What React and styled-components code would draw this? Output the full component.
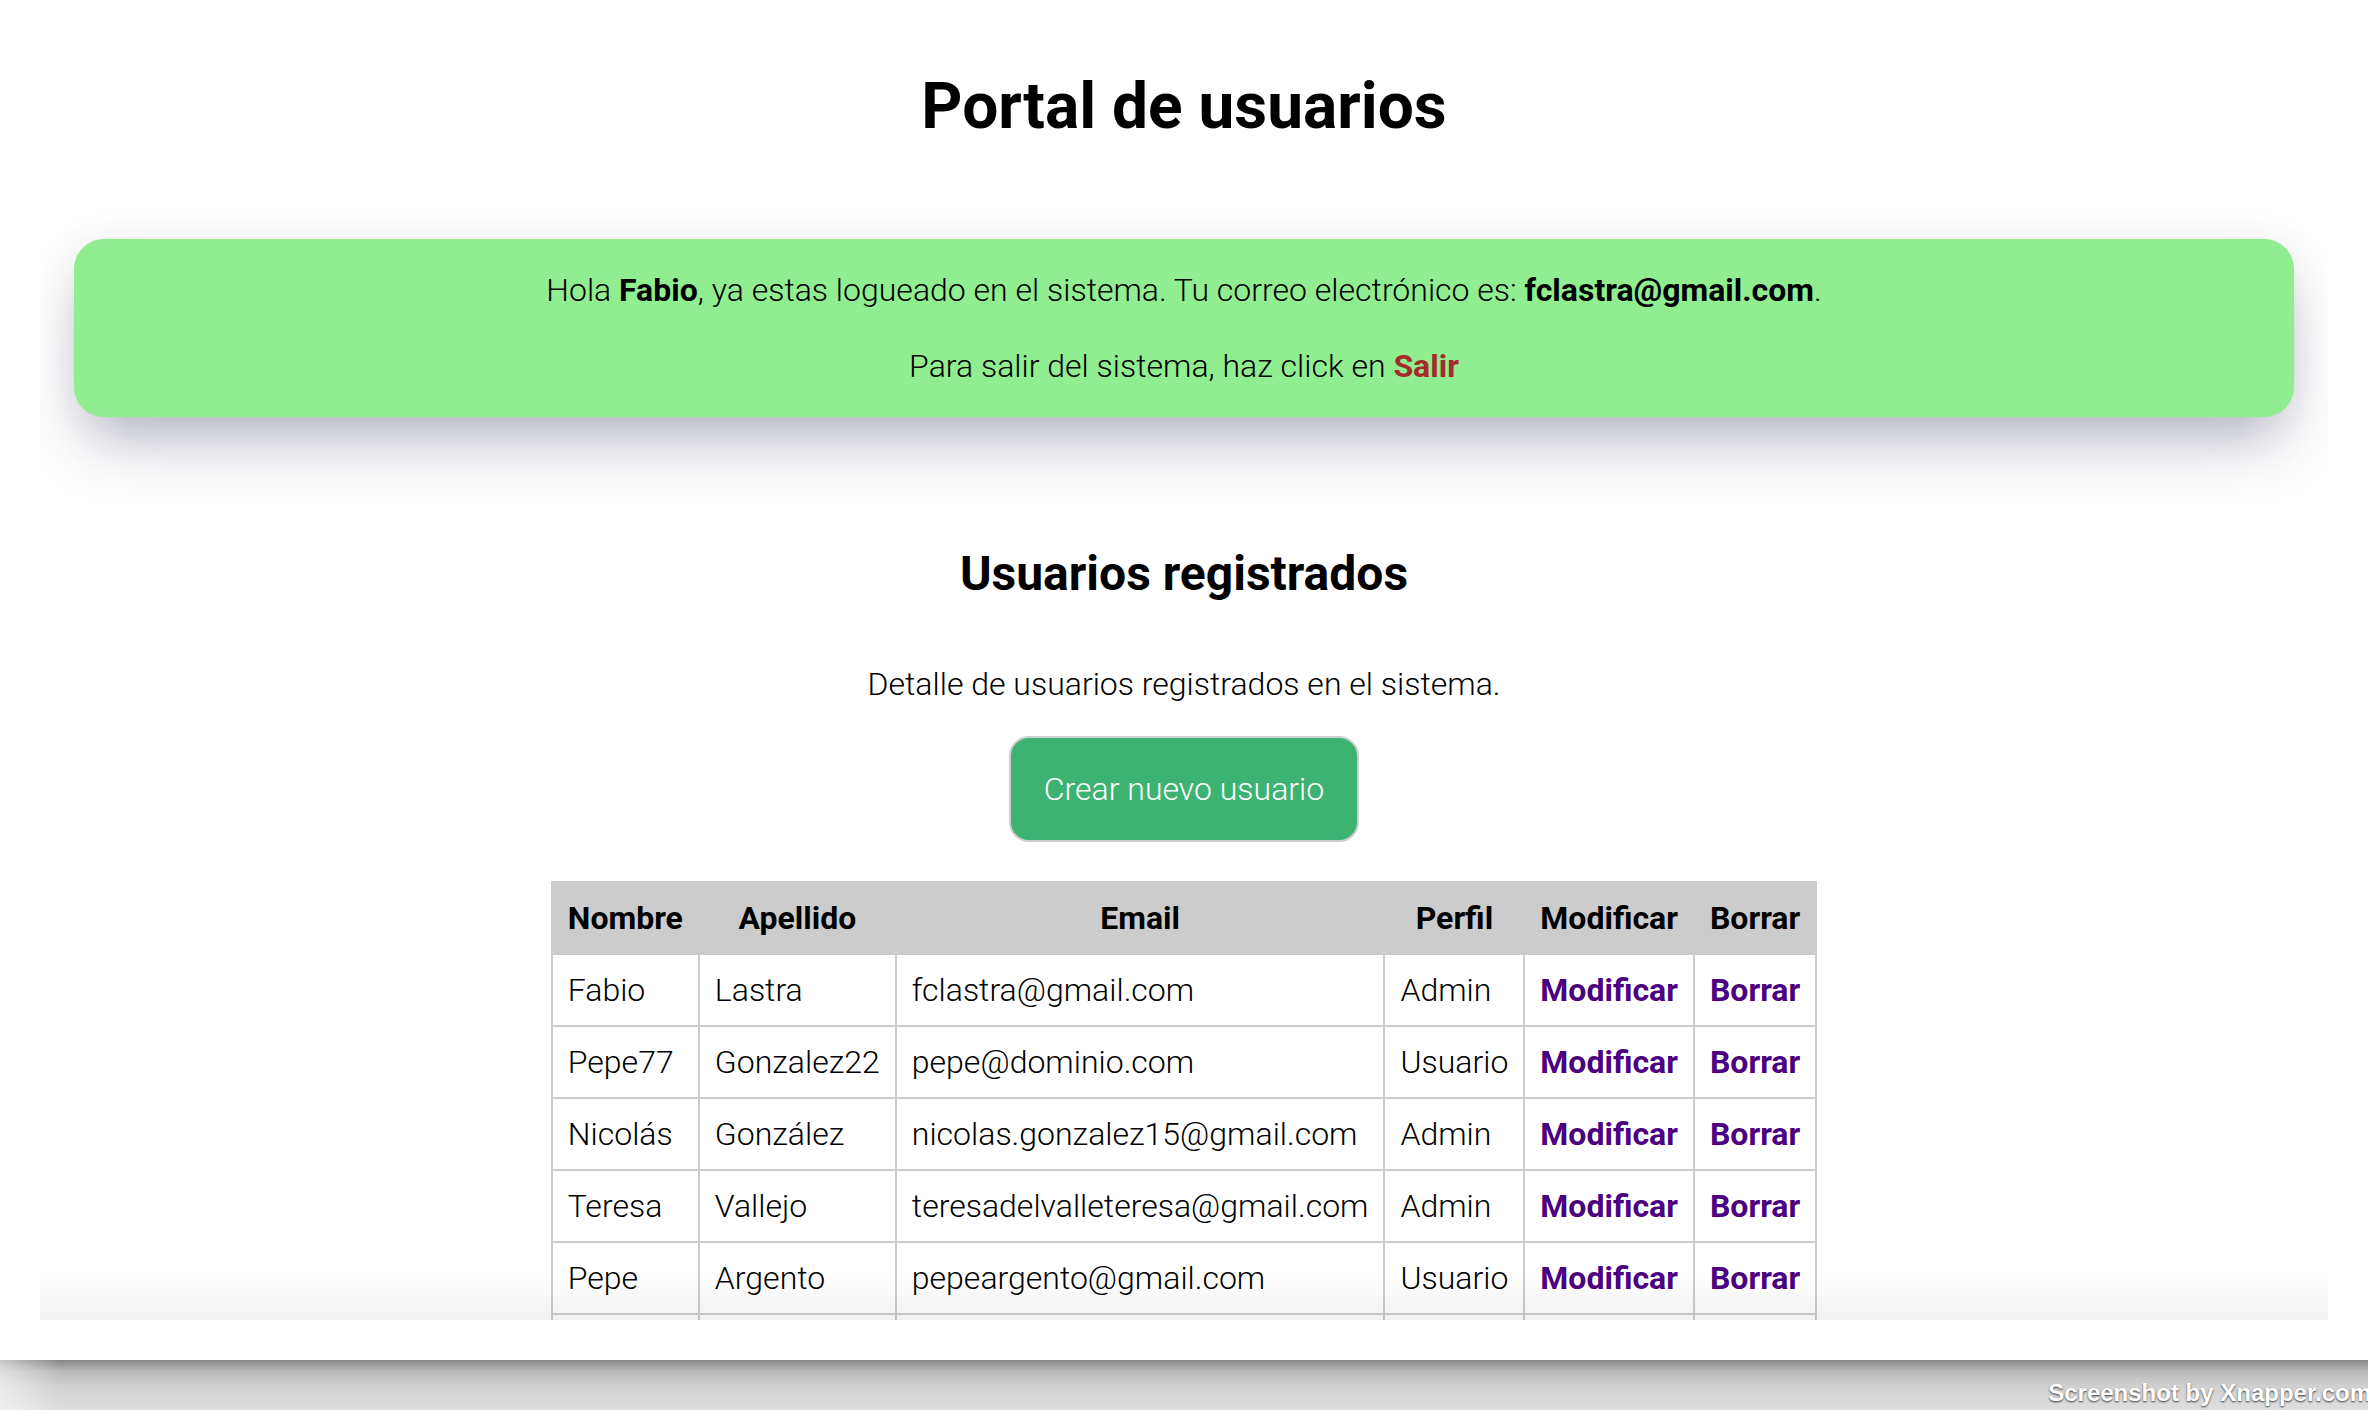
import React from 'react';
import styled, { createGlobalStyle } from 'styled-components';

const GlobalStyle = createGlobalStyle`
  html, body {
    margin: 0;
    padding: 0;
    background: #fff;
  }

  body {
    font-family: 'Roboto Light', Roboto, 'Liberation Sans', sans-serif;
    font-weight: 300;
    color: #000;
  }

  * {
    box-sizing: border-box;
  }
`;

const Frame = styled.div`
  width: 100%;
  height: 1360px;
  padding: 0 40px;
  background: #fff;
`;

const Page = styled.main`
  position: relative;
  height: 1320px;
  overflow: hidden;
  display: flex;
  flex-direction: column;
  align-items: center;
  background: #fff;

  &::after {
    content: '';
    position: absolute;
    left: 0;
    right: 0;
    bottom: 0;
    height: 48px;
    background: linear-gradient(rgba(0, 0, 0, 0), rgba(0, 0, 0, 0.05));
    pointer-events: none;
  }
`;

const Title = styled.h1`
  margin: 69px 0 0;
  font-family: Roboto, 'Liberation Sans', sans-serif;
  font-size: 64px;
  font-weight: 700;
  line-height: normal;
`;

const Banner = styled.section`
  align-self: stretch;
  margin: 95px 34px 0;
  padding: 32px 20px;
  display: flex;
  flex-direction: column;
  align-items: center;
  gap: 38px;
  background: #90ee90;
  border-radius: 30px;
  box-shadow: 0 34px 60px -12px rgba(50, 50, 93, 0.35), 0 0 44px rgba(0, 0, 0, 0.06);
`;

const BannerText = styled.p`
  margin: 0;
  font-size: 32px;
  line-height: normal;
`;

const Strong = styled.b`
  font-family: Roboto, 'Liberation Sans', sans-serif;
  font-weight: 700;
`;

const ExitLink = styled.a`
  font-family: Roboto, 'Liberation Sans', sans-serif;
  color: #a52a2a;
  font-weight: 700;
  text-decoration: none;
`;

const SectionTitle = styled.h2`
  margin: 128px 0 0;
  font-family: Roboto, 'Liberation Sans', sans-serif;
  font-size: 48px;
  font-weight: 700;
  line-height: normal;
`;

const Lead = styled.p`
  margin: 63px 0 0;
  font-size: 32px;
  line-height: normal;
`;

const CreateButton = styled.button`
  margin-top: 33px;
  padding: 32px 33px;
  font-family: 'Roboto Light', Roboto, 'Liberation Sans', sans-serif;
  font-size: 32px;
  font-weight: 300;
  line-height: normal;
  color: #fff;
  background: #3cb371;
  border: 2px solid #cfcfcf;
  border-radius: 20px;
  cursor: pointer;
`;

const UsersTable = styled.table`
  margin-top: 39px;
  border-collapse: collapse;
  font-size: 32px;
`;

const HeadCell = styled.th`
  padding: 16px 15px;
  border: 2px solid #ccc;
  background: #ccc;
  font-family: Roboto, 'Liberation Sans', sans-serif;
  font-weight: 700;
  line-height: normal;
  white-space: nowrap;
`;

const Cell = styled.td`
  padding: 16px 15px;
  height: 72px;
  border: 2px solid #ccc;
  font-weight: 300;
  line-height: normal;
  white-space: nowrap;
`;

const ActionLink = styled.a`
  font-family: Roboto, 'Liberation Sans', sans-serif;
  color: #4b0082;
  font-weight: 700;
  text-decoration: none;
`;

const Strip = styled.footer`
  height: 50px;
  display: flex;
  justify-content: flex-end;
  align-items: flex-end;
  background:
    linear-gradient(to right, rgba(255, 255, 255, 0.55), rgba(255, 255, 255, 0) 60px),
    linear-gradient(#858585 0%, #b9b9b9 22%, #d2d2d2 55%, #dedede 100%);
`;

const Watermark = styled.span`
  margin: 0 -3px 5px 0;
  font-family: 'Liberation Sans', Arial, sans-serif;
  font-size: 24px;
  font-weight: 700;
  line-height: 1;
  color: #fff;
  text-shadow: 0 1px 2px rgba(0, 0, 0, 0.75);
`;

const users = [
  { name: 'Fabio', last: 'Lastra', email: 'fclastra@gmail.com', role: 'Admin' },
  { name: 'Pepe77', last: 'Gonzalez22', email: 'pepe@dominio.com', role: 'Usuario' },
  { name: 'Nicolás', last: 'González', email: 'nicolas.gonzalez15@gmail.com', role: 'Admin' },
  { name: 'Teresa', last: 'Vallejo', email: 'teresadelvalleteresa@gmail.com', role: 'Admin' },
  { name: 'Pepe', last: 'Argento', email: 'pepeargento@gmail.com', role: 'Usuario' },
];

const App = () => {
  return (
    <>
      <GlobalStyle />
      <Frame>
        <Page>
          <Title>Portal de usuarios</Title>

          <Banner>
            <BannerText>
              Hola <Strong>Fabio</Strong>, ya estas logueado en el sistema. Tu correo electrónico es:{' '}
              <Strong>fclastra@gmail.com</Strong>.
            </BannerText>
            <BannerText>
              Para salir del sistema, haz click en <ExitLink href="#">Salir</ExitLink>
            </BannerText>
          </Banner>

          <SectionTitle>Usuarios registrados</SectionTitle>
          <Lead>Detalle de usuarios registrados en el sistema.</Lead>
          <CreateButton type="button">Crear nuevo usuario</CreateButton>

          <UsersTable>
            <thead>
              <tr>
                <HeadCell>Nombre</HeadCell>
                <HeadCell>Apellido</HeadCell>
                <HeadCell>Email</HeadCell>
                <HeadCell>Perfil</HeadCell>
                <HeadCell>Modificar</HeadCell>
                <HeadCell>Borrar</HeadCell>
              </tr>
            </thead>
            <tbody>
              {users.map((user) => (
                <tr key={user.email}>
                  <Cell>{user.name}</Cell>
                  <Cell>{user.last}</Cell>
                  <Cell>{user.email}</Cell>
                  <Cell>{user.role}</Cell>
                  <Cell>
                    <ActionLink href="#">Modificar</ActionLink>
                  </Cell>
                  <Cell>
                    <ActionLink href="#">Borrar</ActionLink>
                  </Cell>
                </tr>
              ))}
              {/* next row is scrolled out of view in the capture */}
              <tr>
                <Cell />
                <Cell />
                <Cell />
                <Cell />
                <Cell />
                <Cell />
              </tr>
            </tbody>
          </UsersTable>
        </Page>
      </Frame>
      <Strip>
        <Watermark>Screenshot by Xnapper.com</Watermark>
      </Strip>
    </>
  );
};

export default App;
